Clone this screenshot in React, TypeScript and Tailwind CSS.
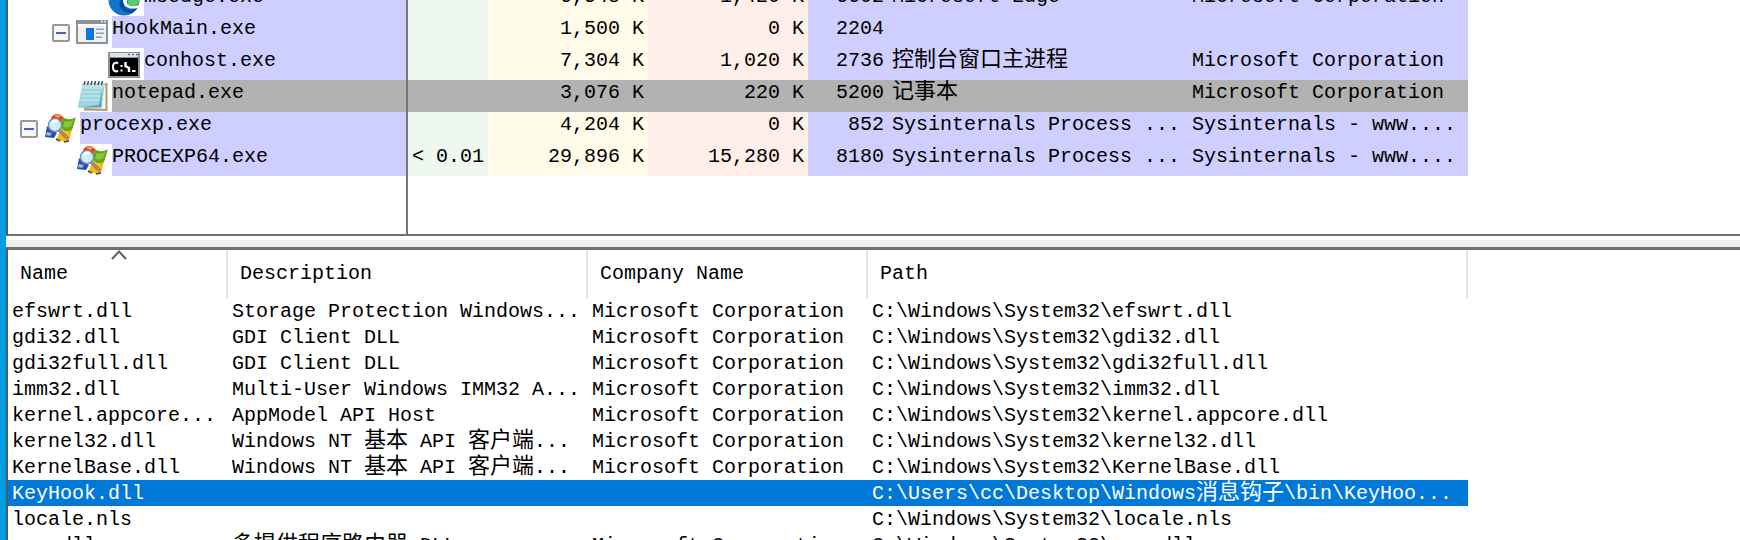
import React from "react";

type Process = {
  name: string;
  indent: string;
  expandable?: boolean;
  icon: React.ReactNode;
  cpu?: string;
  priv: string;
  ws: string;
  pid: string;
  desc: string;
  company: string;
  selected?: boolean;
};

type Dll = { name: string; desc: string; company: string; path: string; selected?: boolean };

function EdgeIcon() {
  return (
    <svg viewBox="0 0 32 32" className="h-8 w-8" aria-hidden="true">
      <circle cx="16" cy="16" r="15.5" fill="#1173c9" />
      <path d="M16 1c9 0 16 6 15.500 15 -.5 6-8 8-13 5 3-4 2-9-4-10C8 10 3 13 1 18 0 8 7 1 16 1z" fill="#3fc6b0" />
      <path d="M20 10c6-5 10 0 11.500 5 0 7-8 10-13 6 4-3 4-7 1.500-11z" fill="#5fce62" />
      <path d="M14 14c-5 4-3 14 8 15 3 0 6-2 7-5-5 3-12 2-13-3-.5-3 1-4 0-5z" fill="#0b4c9a" />
      <path d="M15 16c2-3 6-1 4 1-1 3 2 6 8 5 3 0 5-2 5-2v5l-3-1c-7 2-14-1-14-8z" fill="#fff" />
    </svg>
  );
}

function WindowIcon() {
  return (
    <svg viewBox="0 0 32 32" className="h-8 w-8" aria-hidden="true">
      <rect x="1" y="5" width="30" height="22" fill="#f0f1f2" stroke="#8a9299" strokeWidth="2" />
      <path d="M0 4h32v4H0z" fill="#8a9299" />
      <path d="M25 5.500h1.500M28 5.500h1.500" stroke="#fff" strokeWidth="1.500" />
      <path d="M2 8h28v2H2z" fill="#fff" />
      <path d="M10 12h8v12h-8z" fill="#0c77d8" />
      <path d="M20 13.200h8M20 17.200h8M20 21.200h6" stroke="#9aa0a6" strokeWidth="1.600" />
    </svg>
  );
}

function ConsoleIcon() {
  return (
    <svg viewBox="0 0 32 32" className="h-8 w-8" aria-hidden="true">
      <rect x="0" y="4" width="32" height="26" fill="#8a9299" />
      <path d="M2 5h28v4H2z" fill="#dde3e8" />
      <path d="M20 6.500h2M24 6.500h2M28 6.500h2" stroke="#5b6f94" strokeWidth="1.500" />
      <path d="M2 10h28v18H2z" fill="#000" />
      <path
        d="M10 15.500C8.500 14 5 14.200 5 19s3.500 5 5 3.500M13.500 17v2M13.500 21.500v2M24 23h3.500"
        fill="none"
        stroke="#fff"
        strokeWidth="2"
      />
      <path d="M17.500 14v4l3.500 2v4" fill="none" stroke="#fff" strokeWidth="2.400" />
    </svg>
  );
}

function NotepadIcon() {
  return (
    <svg viewBox="0 0 32 32" className="h-8 w-8" aria-hidden="true">
      <path d="M27 3h4.500V31L8 30.500V28z" fill="#b89a70" />
      <path d="M27 5l2.500.500V29L10 28z" fill="#f7f3e8" />
      <path d="M7 3h22l-3.500 24.500L1.500 28z" fill="#9fd3df" />
      <path d="M7 3h22l-.6 4H6.300z" fill="#c5dfe8" />
      <path d="M7 8h19M6 12h20M5.500 16h20M5 20h19" stroke="#bfe6ec" strokeWidth="1.500" />
      <path d="M26 9l-3 16-18 2L25.500 27.500z" fill="#5fa5ba" />
      <path
        d="M8 5l1-4M11.500 5l1-4M15 5l1-4M18.500 5l1-4M22 5l1-4M25.500 5l1-4"
        stroke="#4a5560"
        strokeWidth="1.500"
      />
    </svg>
  );
}

function ExplorerIcon() {
  return (
    <svg viewBox="0 0 32 32" className="h-8 w-8" aria-hidden="true">
      <path d="M7 7c1-6 10-7 12-1l-2 8-9-2z" fill="#e8410f" />
      <path d="M10 4c2-2 5-2 7 0l-3 2z" fill="#ff9a62" />
      <path d="M19 5c4 3 8 3 13 0l-4 13c-4 3-9 1-11-2z" fill="#63a51c" />
      <path d="M21 9c3 1 5 1 8-1l-2 6c-3 2-6 2-8 0z" fill="#86c93a" />
      <path d="M17 17c4 3 7 3 11 1l-3 11c-5 2-9 0-12-3z" fill="#f5bd12" />
      <path d="M3 14l10 7-3 5-9-1z" fill="#2c4fae" />
      <path d="M3 20l5 1-2 3-4-1z" fill="#9fb6e2" />
      <path d="M15 18l9 9" stroke="#6f5a6b" strokeWidth="3" />
      <path d="M15 18l9 9" stroke="#c79a86" strokeWidth="1.500" />
      <circle cx="11" cy="13" r="6.500" fill="#d3f0fa" stroke="#7d93b5" strokeWidth="1.500" />
      <path d="M7.500 12c1-3 4-4 6-3" stroke="#fff" strokeWidth="2" fill="none" />
      <path d="M12 27l4 2M20 30l5-1" stroke="#4a3c2c" strokeWidth="1.500" />
    </svg>
  );
}

const processes: Process[] = [
  { name: "msedge.exe", indent: "pl-[100px]", icon: <EdgeIcon />, priv: "6,548 K", ws: "1,420 K", pid: "6602", desc: "Microsoft Edge", company: "Microsoft Corporation" },
  { name: "HookMain.exe", indent: "pl-11", expandable: true, icon: <WindowIcon />, priv: "1,500 K", ws: "0 K", pid: "2204", desc: "", company: "" },
  { name: "conhost.exe", indent: "pl-[100px]", icon: <ConsoleIcon />, priv: "7,304 K", ws: "1,020 K", pid: "2736", desc: "控制台窗口主进程", company: "Microsoft Corporation" },
  { name: "notepad.exe", indent: "pl-[68px]", icon: <NotepadIcon />, priv: "3,076 K", ws: "220 K", pid: "5200", desc: "记事本", company: "Microsoft Corporation", selected: true },
  { name: "procexp.exe", indent: "pl-3", expandable: true, icon: <ExplorerIcon />, priv: "4,204 K", ws: "0 K", pid: "852", desc: "Sysinternals Process ...", company: "Sysinternals - www...." },
  { name: "PROCEXP64.exe", indent: "pl-[68px]", icon: <ExplorerIcon />, cpu: "< 0.01", priv: "29,896 K", ws: "15,280 K", pid: "8180", desc: "Sysinternals Process ...", company: "Sysinternals - www...." },
];

const MS = "Microsoft Corporation";
const dlls: Dll[] = [
  { name: "efswrt.dll", desc: "Storage Protection Windows...", company: MS, path: "C:\\Windows\\System32\\efswrt.dll" },
  { name: "gdi32.dll", desc: "GDI Client DLL", company: MS, path: "C:\\Windows\\System32\\gdi32.dll" },
  { name: "gdi32full.dll", desc: "GDI Client DLL", company: MS, path: "C:\\Windows\\System32\\gdi32full.dll" },
  { name: "imm32.dll", desc: "Multi-User Windows IMM32 A...", company: MS, path: "C:\\Windows\\System32\\imm32.dll" },
  { name: "kernel.appcore...", desc: "AppModel API Host", company: MS, path: "C:\\Windows\\System32\\kernel.appcore.dll" },
  { name: "kernel32.dll", desc: "Windows NT 基本 API 客户端...", company: MS, path: "C:\\Windows\\System32\\kernel32.dll" },
  { name: "KernelBase.dll", desc: "Windows NT 基本 API 客户端...", company: MS, path: "C:\\Windows\\System32\\KernelBase.dll" },
  { name: "KeyHook.dll", desc: "", company: "", path: "C:\\Users\\cc\\Desktop\\Windows消息钩子\\bin\\KeyHoo...", selected: true },
  { name: "locale.nls", desc: "", company: "", path: "C:\\Windows\\System32\\locale.nls" },
  { name: "mpr.dll", desc: "多提供程序路由器 DLL", company: MS, path: "C:\\Windows\\System32\\mpr.dll" },
];

/* Han characters are set one step larger than the Latin text around them. */
function Mixed({ text }: { text: string }) {
  return (
    <>
      {text.split(/([\u4e00-\u9fff]+)/).map((part, i) =>
        i % 2 ? (
          <span key={i} className="text-[22px] leading-none">
            {part}
          </span>
        ) : (
          part
        ),
      )}
    </>
  );
}

function ProcessRow({ p }: { p: Process }) {
  const tint = (color: string) => (p.selected ? "bg-[#b2b2b2]" : color);
  const cell = "overflow-hidden px-1 py-0 align-top whitespace-pre";
  return (
    <tr className="h-8" aria-selected={!!p.selected}>
      <td className="border-r-2 border-[#767676] p-0 align-top">
        <div className={`flex h-8 ${p.indent}`}>
          {p.expandable && (
            <button
              type="button"
              aria-label={`Collapse ${p.name}`}
              className="mt-2 mr-1.5 flex h-[18px] w-[18px] shrink-0 items-center justify-center rounded-[2px] border-2 border-[#979797] bg-[#f6f6f6]"
            >
              <span className="h-0.5 w-2.5 bg-[#4b63a7]" />
            </button>
          )}
          <span className="mr-1 h-8 w-8 shrink-0">{p.icon}</span>
          <span className={`flex-1 ${tint("bg-[#cfcfff]")}`}>{p.name}</span>
        </div>
      </td>
      <td className={`${cell} text-right ${tint("bg-[#eef8ef]")}`}>{p.cpu}</td>
      <td className={`${cell} text-right ${tint("bg-[#fffbe8]")}`}>{p.priv}</td>
      <td className={`${cell} text-right ${tint("bg-[#ffefe8]")}`}>{p.ws}</td>
      <td className={`${cell} text-right ${tint("bg-[#cfcfff]")}`}>{p.pid}</td>
      <td className={`${cell} ${tint("bg-[#cfcfff]")}`}>
        <Mixed text={p.desc} />
      </td>
      <td className={`${cell} ${tint("bg-[#cfcfff]")}`}>{p.company}</td>
      <td />
    </tr>
  );
}

export default function App() {
  const cell = "overflow-hidden px-1 pt-0.5 pb-0 align-top whitespace-pre";
  return (
    <div className="flex h-screen overflow-hidden bg-white font-['Liberation_Mono','Noto_Sans_CJK_SC',monospace] text-[20px] text-black">
      <div className="w-1.5 shrink-0 bg-[#009fdf]" />
      <main className="flex min-w-0 flex-1 flex-col">
        <section
          aria-label="Processes"
          className="shrink-0 overflow-hidden border-b-2 border-l-2 border-b-[#6f7171] border-l-[#4d5b66]"
        >
          <table className="-mt-4 w-full table-fixed border-separate border-spacing-0 leading-[26px]">
            <colgroup>
              <col className="w-[400px]" />
              <col className="w-20" />
              <col className="w-40" />
              <col className="w-40" />
              <col className="w-20" />
              <col className="w-[300px]" />
              <col className="w-[280px]" />
              <col />
            </colgroup>
            <tbody>
              {processes.map((p) => (
                <ProcessRow key={p.name} p={p} />
              ))}
              <tr className="h-[58px]">
                <td className="border-r-2 border-[#767676]" />
                <td colSpan={7} />
              </tr>
            </tbody>
          </table>
        </section>
        <div className="h-[11px] shrink-0 border-t-4 border-white bg-[#efefef]" role="separator" />
        <section
          aria-label="Loaded modules"
          className="min-h-0 flex-1 overflow-hidden border-t-3 border-l-2 border-t-[#6f7171] border-l-[#4d5b66]"
        >
          <table className="w-full table-fixed border-separate border-spacing-0 leading-6">
            <colgroup>
              <col className="w-[220px]" />
              <col className="w-[360px]" />
              <col className="w-[280px]" />
              <col className="w-[600px]" />
              <col />
            </colgroup>
            <thead>
              <tr className="h-12">
                {["Name", "Description", "Company Name", "Path"].map((h, i) => (
                  <th
                    key={h}
                    aria-sort={i === 0 ? "ascending" : undefined}
                    className="relative border-r-2 border-[#e5e5e5] p-0 text-left font-normal"
                  >
                    {i === 0 && (
                      <svg viewBox="0 0 16 10" className="absolute top-0 left-[103px] h-2.5 w-4" aria-hidden="true">
                        <path d="M1 9l7-7.500L15 9" fill="none" stroke="#606060" strokeWidth="2" />
                      </svg>
                    )}
                    <button type="button" className="block w-full px-3 text-left">
                      {h}
                    </button>
                  </th>
                ))}
                <th />
              </tr>
            </thead>
            <tbody>
              {dlls.map((d) => {
                const tone = d.selected ? "bg-[#0078d7] text-white" : "";
                return (
                  <tr key={d.name} className="h-[26px]" aria-selected={!!d.selected}>
                    <td className={`${cell} ${tone}`}>{d.name}</td>
                    <td className={`${cell} ${tone}`}>
                      <Mixed text={d.desc} />
                    </td>
                    <td className={`${cell} ${tone}`}>{d.company}</td>
                    <td className={`${cell} ${tone}`}>
                      <Mixed text={d.path} />
                    </td>
                    <td />
                  </tr>
                );
              })}
            </tbody>
          </table>
        </section>
      </main>
    </div>
  );
}
